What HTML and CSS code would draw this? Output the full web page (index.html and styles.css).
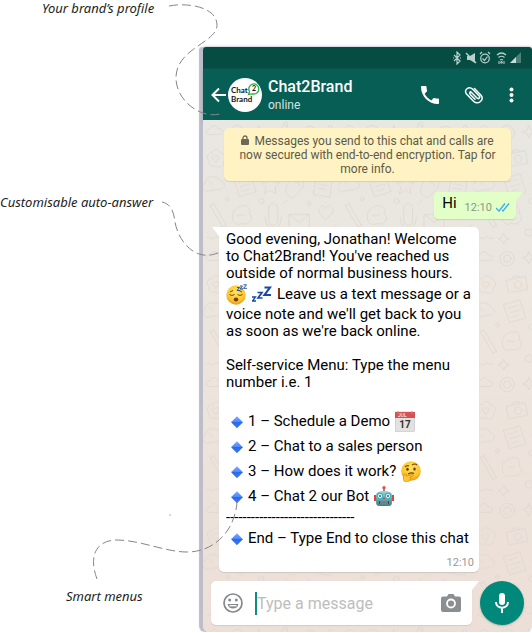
FILE: index.html
```html
<!DOCTYPE html>
<html lang="en">
<head>
<meta charset="utf-8">
<meta name="viewport" content="width=device-width, initial-scale=1">
<title>Chat2Brand auto-answer</title>
<link rel="stylesheet" href="styles.css">
</head>
<body>
<svg width="0" height="0" class="defs" aria-hidden="true">
  <defs>
    <linearGradient id="blue" x1="0" y1="0" x2="0" y2="1"><stop offset="0" stop-color="#7eacff"/><stop offset=".5" stop-color="#4c86fb"/><stop offset=".52" stop-color="#2867ef"/><stop offset="1" stop-color="#3b7cff"/></linearGradient>
    <radialGradient id="face" cx=".5" cy=".35" r=".7"><stop offset="0" stop-color="#ffe35c"/><stop offset=".65" stop-color="#fcc52d"/><stop offset="1" stop-color="#e78d16"/></radialGradient>
    <linearGradient id="metal" x1="0" y1="0" x2="0" y2="1"><stop offset="0" stop-color="#a8cdd2"/><stop offset="1" stop-color="#417f88"/></linearGradient>
    <symbol id="diamond" viewBox="0 0 12 12"><path d="M6 .3 11.7 6 6 11.7.3 6z" fill="url(#blue)"/><path d="m.3 6 5.7 5.7L11.7 6" fill="none" stroke="#2458cc" stroke-width=".7"/></symbol>
    <pattern id="doodles" width="150" height="140" patternUnits="userSpaceOnUse" patternTransform="scale(.9)">
      <g fill="none" stroke="#ded8d1" stroke-width="1" stroke-linecap="round" stroke-linejoin="round">
        <path d="M6 16c-4-1-3-7 2-6 1-5 8-5 9 0 5-1 7 5 2 6z"/>
        <circle cx="38" cy="14" r="8"/><circle cx="38" cy="14" r="4"/>
        <path d="m62 6 2 5 5 2-5 2-2 5-2-5-5-2 5-2z"/>
        <path d="m82 22 7-17 5 2-7 17zM89 5l2-3 3 1v4"/>
        <circle cx="119" cy="14" r="7"/><path d="M109 18c-5 5 24-4 20-8M116 12h5"/>
        <circle cx="141" cy="8" r="2"/><circle cx="145" cy="28" r="3"/>
        <path d="M10 36c3-5 9-3 10 1 5 0 7 6 3 9 1 5-5 8-9 5-5 2-9-2-7-6-4-3-2-9 3-9zM14 47l-4-5c0-4 4-3 4-1 0-2 5-2 4 1z"/>
        <path d="m37 38 21-4 3 14-21 4zM43 37l1-3 7-1 1 2"/><circle cx="50" cy="43" r="4"/>
        <path d="M78 52V36l13-3v15M78 40l13-3"/><circle cx="75" cy="52" r="3"/><circle cx="88" cy="48" r="3"/>
        <path d="m104 53 12-16 12 15zM108 48l17 1M116 37l-2-5"/>
        <circle cx="68" cy="31" r="2"/><circle cx="101" cy="32" r="1.5"/>
        <path d="M2 70c0-8 14-10 18-2 5 0 5 9-1 9L4 79c-5-1-6-7-2-9zM7 68l4 4"/>
        <path d="m34 65 18-5 7 20-18 5zM39 69l11-3M41 74l12-3M43 79l8-2"/>
        <path d="m75 63 3 6 7 1-5 5 1 7-6-4-7 4 2-7-5-5 7-1z"/>
        <path d="M98 66c8-8 18 1 12 10l-9 10c-10 0-13-11-3-20zM102 70c3-3 7 1 4 4"/>
        <path d="m126 65 17 3-2 18-18-3zM129 71l10 2M128 76l9 1"/>
        <circle cx="27" cy="88" r="2"/><circle cx="65" cy="90" r="3"/><circle cx="118" cy="93" r="2"/>
        <path d="m8 95 14 24M12 93l14 24M8 95l4-2M22 119l4-2"/>
        <path d="M35 100c10-10 20-3 16 4 7 4 0 14-8 11-9 5-14-8-8-15zM38 106h8"/>
        <path d="M73 98v13c0 8 10 8 10 0V98c0-7-10-7-10 0zM69 108c0 17 18 17 18 0M78 121v7"/>
        <path d="M96 105h22v15H96zM96 105l11 9 11-9"/>
        <path d="M136 98c-3-6-11 0-6 6l6 7 7-7c5-6-4-12-7-6z"/>
        <circle cx="62" cy="125" r="4"/><circle cx="130" cy="128" r="7"/><circle cx="130" cy="128" r="2"/>
        <path d="m34 126 2 4 4 2-4 2-2 4-2-4-4-2 4-2zM4 131c3-4 6 4 9 0s6 4 9 0M94 132l10-5M145 120l3-3M90 92l4-3"/>
      </g>
    </pattern>
  </defs>
</svg>

<div class="page">
  <aside class="notes">
    <p class="note note-profile">Your brand’s profile</p>
    <p class="note note-answer">Customisable auto-answer</p>
    <p class="note note-menus">Smart menus</p>
  </aside>

  <main class="phone">
    <div class="status">
      <svg width="68" height="14" viewBox="0 0 68 14" fill="none" stroke="#b9d1cd" stroke-width="1.2" role="img" aria-label="Phone status">
        <path d="m1 4 6 6-3 3V1l3 3-6 6M0 7h1M7 7h1"/>
        <path d="M14 5h3l5-3v10l-5-3h-3z" fill="#b9d1cd" stroke="none"/><path d="m13 2 10 10" stroke="#b9d1cd" stroke-width="1.4"/>
        <circle cx="32" cy="7.5" r="4.3"/><path d="m27 3 2-2M37 3l-2-2M29.500 7.500l2 2 3-4"/>
        <path d="M44 4q4.500-4 9 0M45.500 6.500q3-2.500 6 0M47 9q1.500-1 3 0"/><path d="m48.500 10 1 2h-2zM46 13v-3M51 13v-3" stroke-width="1"/>
        <path d="M57 12 68 1v11z" fill="#4d8078" stroke="none"/><path d="M57 12l6-6v6z" fill="#c9dcd9" stroke="none"/>
      </svg>
    </div>

    <header class="bar">
      <button class="icon-btn" aria-label="Back"><svg width="15" height="16" viewBox="0 0 15 16" fill="none" stroke="#fff" stroke-width="2"><path d="M15 8H2M8 1.500 1.500 8 8 14.500"/></svg></button>
      <svg class="avatar" width="34" height="34" viewBox="0 0 34 34" role="img" aria-label="Chat2Brand logo">
        <circle cx="17" cy="17" r="17" fill="#fff"/>
        <path d="M21.500 13.500a5 5 0 1 1 3 2.300l-4 .7z" fill="#fff" stroke="#2fae4a" stroke-width="1.300"/>
        <text x="3" y="15" class="logo-text">Chat</text><text x="3" y="24" class="logo-text">Brand</text>
        <text x="24" y="13" class="logo-num">2</text>
      </svg>
      <div class="who"><h1 class="name">Chat2Brand</h1><p class="online">online</p></div>
      <div class="actions">
        <button class="icon-btn" aria-label="Call"><svg width="18" height="18" viewBox="3 3 18 18" fill="#fff"><path d="M6.620 10.790c1.440 2.830 3.760 5.140 6.590 6.590l2.200-2.200c.27-.27.67-.36 1.020-.24 1.120.37 2.330.57 3.570.57.550 0 1 .45 1 1V20c0 .55-.45 1-1 1C10.610 21 3 13.390 3 4c0-.55.45-1 1-1h3.500c.55 0 1 .45 1 1 0 1.250.2 2.450.57 3.570.11.35.03.74-.25 1.020z"/></svg></button>
        <button class="icon-btn" aria-label="Attach"><svg width="20" height="18" viewBox="0 0 20 18" fill="none" stroke="#fff" stroke-width="1.500" stroke-linecap="round"><path d="M6.500 5.500 13 12c1.600 1.500 3.600-.5 2.200-2.100L8.500 3C5-.3-.8 4 2.500 8l7 7.200c4.500 4.200 11.500-1.500 7.500-6L10.500 2.500M6.500 5.500c-1.200 1.200-.8 2.300 0 3.200l4.500 4.600"/></svg></button>
        <button class="icon-btn" aria-label="More options"><svg width="5" height="16" viewBox="0 0 5 16" fill="#fff"><circle cx="2.500" cy="2.500" r="2"/><circle cx="2.500" cy="8" r="2"/><circle cx="2.500" cy="13.500" r="2"/></svg></button>
      </div>
    </header>

    <section class="chat">
      <svg class="wallpaper" width="100%" height="100%" aria-hidden="true"><rect width="100%" height="100%" fill="url(#doodles)"/></svg>
      <p class="secure"><svg class="lock" width="8" height="10" viewBox="0 0 8 10"><path d="M2 5V3a2 2 0 0 1 4 0v2" fill="none" stroke="#6d6955" stroke-width="1.300"/><rect y="4" width="8" height="6" rx="1" fill="#6d6955"/></svg>Messages you send to this chat and calls are now secured with end-to-end encryption. Tap for more info.</p>

      <div class="sent"><span class="hi">Hi</span><time class="time">12:10</time>
        <svg class="ticks" width="14" height="9" viewBox="0 0 14 9" fill="none" stroke="#3eb1ec" stroke-width="1.400" role="img" aria-label="Read"><path d="m0 5 3 3 6-7.500M6 7l1 1 6-7.500"/></svg>
      </div>

      <article class="received">
        <p class="para">Good evening, Jonathan! Welcome<br>to Chat2Brand! You've reached us<br>outside of normal business hours.</p>
        <p class="emoji-line">
          <svg width="21" height="21" viewBox="0 0 21 21" role="img" aria-label="Sleeping face"><circle cx="10" cy="11" r="9.700" fill="url(#face)"/><path d="M3.500 10.500q2.500 2 5 0M11.500 10.500q2.500 2 5 0M4 8l3-1.500M13 6.500 16 8" fill="none" stroke="#774610" stroke-width="1"/><ellipse cx="10" cy="15.500" rx="2.300" ry="2" fill="#70400f"/><path d="M11 3.500h2.500l-2.500 3h3M14 2h2.500L14 5h3M17.500.8h3l-3 3.500H21" fill="none" stroke="#1f54b5" stroke-width="1"/></svg>
          <svg width="20" height="16" viewBox="0 0 20 16" role="img" aria-label="Zzz" fill="none" stroke="#1748a8"><path d="M0 11h3.500L.5 15H4" stroke-width="1.300"/><path d="M5.500 6.500h4.500L6 12h4.500" stroke-width="1.700"/><path d="M12.500 1.500H18L12.500 9H19" stroke-width="2.100"/></svg>
          <span>Leave us a text message or a</span>
        </p>
        <p class="para">voice note and we'll get back to you<br>as soon as we're back online.</p>
        <p class="para spaced">Self-service Menu: Type the menu<br>number i.e. 1</p>
        <ul class="menu">
          <li class="item"><svg class="bullet"><use href="#diamond"/></svg>1 – Schedule a Demo
            <svg width="20" height="21" viewBox="0 0 20 21" role="img" aria-label="Calendar"><rect x=".3" y="1" width="19.400" height="19.500" fill="#e2e2e1" stroke="#b9b9b9" stroke-width=".5"/><path d="M0 1h20v6H0z" fill="#d85151"/><path d="M3 0v3M17 0v3" stroke="#999"/><text x="3" y="6" class="cal-month">JUL</text><text x="10" y="17" class="cal-day">17</text></svg></li>
          <li class="item"><svg class="bullet"><use href="#diamond"/></svg>2 – Chat to a sales person</li>
          <li class="item"><svg class="bullet"><use href="#diamond"/></svg>3 – How does it work?
            <svg width="20" height="21" viewBox="0 0 20 21" role="img" aria-label="Thinking face"><circle cx="10" cy="10" r="9.800" fill="url(#face)"/><path d="M4 6q2-2 4-1M11 4q3-2 5 0M7 13q4-2 6-.5" fill="none" stroke="#70410e" stroke-width="1.100"/><ellipse cx="6.500" cy="8.300" rx="1.200" ry="1.500" fill="#5b3410"/><ellipse cx="13.500" cy="8" rx="1.200" ry="1.500" fill="#5b3410"/><path d="M3.500 13c1-1 2 0 2 2l6-1.500c1.500 0 1.300 1.500 0 1.800l-2.500.7c1 2-.5 5-3.500 5-3.500 0-4-4-2-8z" fill="#ffc532" stroke="#d6810f" stroke-width=".7"/></svg></li>
          <li class="item"><svg class="bullet"><use href="#diamond"/></svg>4 – Chat 2 our Bot
            <svg width="20" height="21" viewBox="0 0 20 21" role="img" aria-label="Robot"><circle cx="10" cy="1.800" r="1.700" fill="#dd563c"/><path d="M10 3v3" stroke="#77949a" stroke-width="2"/><path d="M0 9h2v6H0zM18 9h2v6h-2z" fill="#dc4438"/><path d="M2 9q0-4 8-4t8 4v7q0 4-3 4H5q-3 0-3-4z" fill="url(#metal)"/><circle cx="6" cy="10" r="2.600" fill="#fff" stroke="#33b7cb" stroke-width="1.200"/><circle cx="14" cy="10" r="2.600" fill="#fff" stroke="#33b7cb" stroke-width="1.200"/><circle cx="6" cy="10" r="1" fill="#285660"/><circle cx="14" cy="10" r="1" fill="#285660"/><path d="m10 11 1 2H9z" fill="#b53b34"/><rect x="5" y="15" width="10" height="3" rx="1" fill="#303f44"/><path d="M7 15v3M9 15v3M11 15v3M13 15v3" stroke="#d5e6e7" stroke-width=".8"/></svg></li>
        </ul>
        <p class="rule">-------------------------------</p>
        <ul class="menu"><li class="item"><svg class="bullet"><use href="#diamond"/></svg>End – Type End to close this chat</li></ul>
        <time class="time received-time">12:10</time>
      </article>

      <form class="composer">
        <div class="field">
          <button type="button" class="icon-btn" aria-label="Emoji"><svg width="20" height="20" viewBox="0 0 20 20"><circle cx="10" cy="10" r="9" fill="none" stroke="#84898b" stroke-width="1.700"/><circle cx="6.700" cy="7" r="1.500" fill="#84898b"/><circle cx="13.300" cy="7" r="1.500" fill="#84898b"/><path d="M4.500 11h11c-1 6-10 6-11 0z" fill="#84898b"/><path d="M6.500 12.700h7" stroke="#fff" stroke-width="1.300"/></svg></button>
          <input class="message" type="text" placeholder="Type a message" aria-label="Type a message">
          <button type="button" class="icon-btn" aria-label="Camera"><svg width="20" height="18" viewBox="0 0 20 18"><path d="M2 2.500h4L7.500 0h5L14 2.500h4a2 2 0 0 1 2 2V16a2 2 0 0 1-2 2H2a2 2 0 0 1-2-2V4.500a2 2 0 0 1 2-2z" fill="#8b8f91"/><circle cx="10" cy="9.500" r="4" fill="none" stroke="#fff" stroke-width="1.800"/></svg></button>
        </div>
        <button type="button" class="mic" aria-label="Record voice note"><svg width="14" height="20" viewBox="0 0 14 20"><rect x="4" width="6" height="12" rx="3" fill="#fff"/><path d="M1 9c0 7.500 12 7.500 12 0M7 15v5" fill="none" stroke="#fff" stroke-width="2"/></svg></button>
      </form>
    </section>
  </main>

  <svg class="pointers" width="532" height="633" viewBox="0 0 532 633" fill="none" stroke="#85858e" stroke-width="1" stroke-dasharray="9 4" aria-hidden="true">
    <path d="M169 6C190 2 217 8 217 25c0 18-41 23-41 53 0 22 24 41 44 36"/>
    <path d="M162 202c10 2 12 12 13 20 3 18 20 42 45 30"/>
    <path d="M97 579c-9-24 0-39 20-39 23 0 48 12 70 12 28 0 48-22 50-50"/>
    <circle cx="170" cy="515" r="1" fill="#ccc" stroke="none"/>
  </svg>
</div>
</body>
</html>
```
FILE: styles.css
```css
* { box-sizing: border-box; }

body {
  margin: 0;
  background: #fff;
  color: #000;
  font-family: Roboto, "Liberation Sans", sans-serif;
}

h1, p, ul { margin: 0; padding: 0; }
ul { list-style: none; }
svg { display: block; flex: none; }
.defs { position: absolute; }

.page {
  position: relative;
  display: grid;
  grid-template-columns: 203px minmax(0, 1fr);
  align-items: start;
}

.pointers { position: absolute; top: 0; left: 0; pointer-events: none; }

/* Callouts */
.note {
  font: italic 13px/16px "Noto Sans", "Open Sans", sans-serif;
  color: #1d1d1d;
  white-space: nowrap;
}
.note-profile { margin-left: 42px; }
.note-answer { margin-top: 178px; }
.note-menus { margin: 378px 0 0 66px; }

/* Phone */
.phone {
  margin-top: 47px;
  border-radius: 3px 3px 6px 6px;
  box-shadow: -4px 0 1px #bcbcca, 0 -1px 2px #d4d4dc;
}

.status {
  display: flex;
  justify-content: flex-end;
  align-items: center;
  height: 22px;
  padding-right: 11px;
  border-radius: 3px 3px 0 0;
  background: #054d43;
}

.bar {
  display: flex;
  align-items: center;
  height: 51px;
  padding: 0 18px 0 8px;
  background: #075e54;
  box-shadow: 0 1px 2px #8fa5a0;
  position: relative;
}

.icon-btn { display: block; flex: none; padding: 0; border: 0; background: none; }
.avatar { margin: 0 6px 0 2px; }
.logo-text { font: bold 8px Lato, sans-serif; fill: #151515; }
.logo-num { font: bold 7px Lato, sans-serif; fill: #151515; }
.name { font-size: 16px; font-weight: 500; line-height: 20px; color: #fff; }
.online { font-size: 12px; line-height: 16px; color: #d5e4e2; }
.actions { display: flex; align-items: center; gap: 25px; margin-left: auto; }

.chat {
  position: relative;
  display: flex;
  flex-direction: column;
  padding: 8px 8px 7px;
  border-radius: 0 0 6px 6px;
  background: linear-gradient(#e8e7e2, #ece5de 40%, #ecdfd7);
}
.wallpaper { position: absolute; inset: 0; }

.secure {
  position: relative;
  margin: 0 13px;
  padding: 6px 14px 5px;
  border-radius: 5px;
  background: #fff3c3;
  box-shadow: 0 1px 1px #d3cec1;
  font-size: 12px;
  line-height: 14px;
  text-align: center;
  color: #5d5a48;
}
.lock { display: inline-block; margin-right: 5px; }

.sent {
  position: relative;
  display: flex;
  align-items: center;
  align-self: flex-end;
  gap: 4px;
  height: 27px;
  margin: 11px 8px 0 0;
  padding: 0 6px 0 8px;
  border-radius: 4px 0 4px 4px;
  background: #e1ffc7;
  box-shadow: 0 1px 1px #cbd2bd;
}
.sent::after, .received::before, .field::after {
  content: "";
  position: absolute;
  top: 0;
  width: 7px;
  height: 9px;
  background: inherit;
}
.sent::after, .field::after { left: 100%; clip-path: polygon(0 0, 100% 0, 0 100%); }
.received::before { right: 100%; clip-path: polygon(0 0, 100% 0, 100% 100%); }

.hi { margin: 0 4px 4px 0; font-size: 15px; line-height: 17px; }
.time { padding-top: 4px; font-size: 11px; line-height: 16px; color: #8f968a; }
.ticks { margin-top: 4px; }

.received {
  position: relative;
  align-self: flex-start;
  width: 260px;
  margin: 8px 0 0 8px;
  padding: 4px 5px 1px 7px;
  border-radius: 0 5px 5px 5px;
  background: #fff;
  box-shadow: 0 1px 1px #cfc8c0;
  font-size: 15px;
  line-height: 17px;
  white-space: nowrap;
}
.emoji-line { display: flex; align-items: center; gap: 5px; height: 24px; }
.spaced { margin: 17px 0 18px; }
.item { display: flex; align-items: center; gap: 5px; height: 25px; padding-left: 5px; }
.bullet { width: 12px; height: 12px; }
.cal-month { font: 5px Roboto, sans-serif; fill: #fff; }
.cal-day { font: bold 10px Roboto, sans-serif; fill: #333; text-anchor: middle; }
.received-time { display: block; text-align: right; color: #999; }

.composer { position: relative; display: flex; align-items: center; gap: 8px; margin-top: 9px; }
.field {
  position: relative;
  display: flex;
  flex: 1;
  min-width: 0;
  align-items: center;
  height: 44px;
  padding: 0 11px 0 12px;
  border-radius: 5px 0 5px 5px;
  background: #fff;
  box-shadow: 0 1px 1px #d5cbc3;
}
.message {
  flex: 1;
  min-width: 0;
  height: 23px;
  margin-left: 12px;
  padding: 0;
  border: 0;
  border-left: 2px solid #128c7e;
  background: none;
  font: 16px/20px Roboto, sans-serif;
  outline: none;
}
.message::placeholder { color: #bdbdbd; opacity: 1; }
.mic {
  display: grid;
  place-items: center;
  flex: none;
  width: 44px;
  height: 44px;
  padding: 0;
  border: 0;
  border-radius: 50%;
  background: #00897b;
  box-shadow: 0 1px 2px #b9afa8;
}
```
